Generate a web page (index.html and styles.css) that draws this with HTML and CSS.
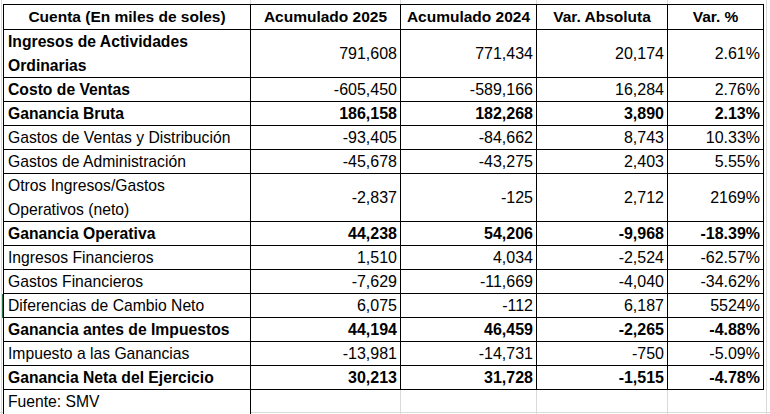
FILE: index.html
```html
<!DOCTYPE html>
<html lang="es">
<head>
<meta charset="utf-8">
<title>Estado de Resultados</title>
<link rel="stylesheet" href="styles.css">
</head>
<body>
<div class="sheet">
  <div class="c hd">Cuenta (En miles de soles)</div>
  <div class="c hd">Acumulado 2025</div>
  <div class="c hd">Acumulado 2024</div>
  <div class="c hd">Var. Absoluta</div>
  <div class="c hd">Var. %</div>

  <div class="c lbl b tall">Ingresos de Actividades<br>Ordinarias</div>
  <div class="c num tall">791,608</div>
  <div class="c num tall">771,434</div>
  <div class="c num tall">20,174</div>
  <div class="c num tall">2.61%</div>

  <div class="c lbl b">Costo de Ventas</div>
  <div class="c num">-605,450</div>
  <div class="c num">-589,166</div>
  <div class="c num">16,284</div>
  <div class="c num">2.76%</div>

  <div class="c lbl b">Ganancia Bruta</div>
  <div class="c num b">186,158</div>
  <div class="c num b">182,268</div>
  <div class="c num b">3,890</div>
  <div class="c num b">2.13%</div>

  <div class="c lbl">Gastos de Ventas y Distribución</div>
  <div class="c num">-93,405</div>
  <div class="c num">-84,662</div>
  <div class="c num">8,743</div>
  <div class="c num">10.33%</div>

  <div class="c lbl">Gastos de Administración</div>
  <div class="c num">-45,678</div>
  <div class="c num">-43,275</div>
  <div class="c num">2,403</div>
  <div class="c num">5.55%</div>

  <div class="c lbl tall">Otros Ingresos/Gastos<br>Operativos (neto)</div>
  <div class="c num tall">-2,837</div>
  <div class="c num tall">-125</div>
  <div class="c num tall">2,712</div>
  <div class="c num tall">2169%</div>

  <div class="c lbl b">Ganancia Operativa</div>
  <div class="c num b">44,238</div>
  <div class="c num b">54,206</div>
  <div class="c num b">-9,968</div>
  <div class="c num b">-18.39%</div>

  <div class="c lbl">Ingresos Financieros</div>
  <div class="c num">1,510</div>
  <div class="c num">4,034</div>
  <div class="c num">-2,524</div>
  <div class="c num">-62.57%</div>

  <div class="c lbl">Gastos Financieros</div>
  <div class="c num">-7,629</div>
  <div class="c num">-11,669</div>
  <div class="c num">-4,040</div>
  <div class="c num">-34.62%</div>

  <div class="c lbl">Diferencias de Cambio Neto</div>
  <div class="c num">6,075</div>
  <div class="c num">-112</div>
  <div class="c num">6,187</div>
  <div class="c num">5524%</div>

  <div class="c lbl b">Ganancia antes de Impuestos</div>
  <div class="c num b">44,194</div>
  <div class="c num b">46,459</div>
  <div class="c num b">-2,265</div>
  <div class="c num b">-4.88%</div>

  <div class="c lbl">Impuesto a las Ganancias</div>
  <div class="c num">-13,981</div>
  <div class="c num">-14,731</div>
  <div class="c num">-750</div>
  <div class="c num">-5.09%</div>

  <div class="c lbl b">Ganancia Neta del Ejercicio</div>
  <div class="c num b">30,213</div>
  <div class="c num b">31,728</div>
  <div class="c num b">-1,515</div>
  <div class="c num b">-4.78%</div>

  <div class="c lbl src">Fuente: SMV</div>
  <div class="empty"></div>
  <div class="empty"></div>
  <div class="empty"></div>
  <div class="empty"></div>
</div>
</body>
</html>
```

FILE: styles.css
```css
html, body {
  margin: 0;
  padding: 0;
}

body {
  width: 770px;
  height: 414px;
  overflow: hidden;
  background-color: #ffffff;
  background-image:
    linear-gradient(#217346, #217346),
    linear-gradient(#dadada, #dadada),
    linear-gradient(#dadada, #dadada),
    linear-gradient(#dadada, #dadada),
    linear-gradient(#dadada, #dadada),
    linear-gradient(#dadada, #dadada),
    linear-gradient(#dadada, #dadada),
    linear-gradient(#dadada, #dadada);
  background-repeat: no-repeat;
  background-size:
    1px 24px,
    1px 100%,
    1px 100%,
    1px 100%,
    1px 100%,
    1px 100%,
    1px 100%,
    100% 1px;
  background-position:
    2px 294px,
    1px 0,
    250px 0,
    400px 0,
    536px 0,
    667px 0,
    766px 0,
    0 412px;
  color: #000;
}

.sheet {
  display: grid;
  grid-template-columns: 247px 150px 136px 131px 96px;
  grid-template-rows: 25px 48px 24px 24px 24px 24px 48px 24px 24px 24px 24px 24px 24px 24px 24px;
  width: max-content;
  margin: 4px 0 0 3px;
  border-left: 1px solid #000;
  border-top: 1px solid #000;
}

.c {
  box-sizing: border-box;
  background: #fff;
  border-right: 1px solid #000;
  border-bottom: 1px solid #000;
  line-height: 24px;
  white-space: nowrap;
}

.hd {
  font-family: "Liberation Sans", Arial, sans-serif;
  font-size: 15.5px;
  font-weight: 700;
  text-align: center;
}

.lbl {
  font-family: "Liberation Sans", Arial, sans-serif;
  font-size: 15.7px;
  padding-left: 4px;
}

.num {
  font-family: "Liberation Sans", Arial, sans-serif;
  font-size: 16px;
  text-align: right;
  padding-right: 3px;
}

.tall.num {
  display: flex;
  align-items: center;
  justify-content: flex-end;
}

.b {
  font-weight: 700;
}

.src {
  border-bottom: none;
}

.empty {
  background: transparent;
}
```
